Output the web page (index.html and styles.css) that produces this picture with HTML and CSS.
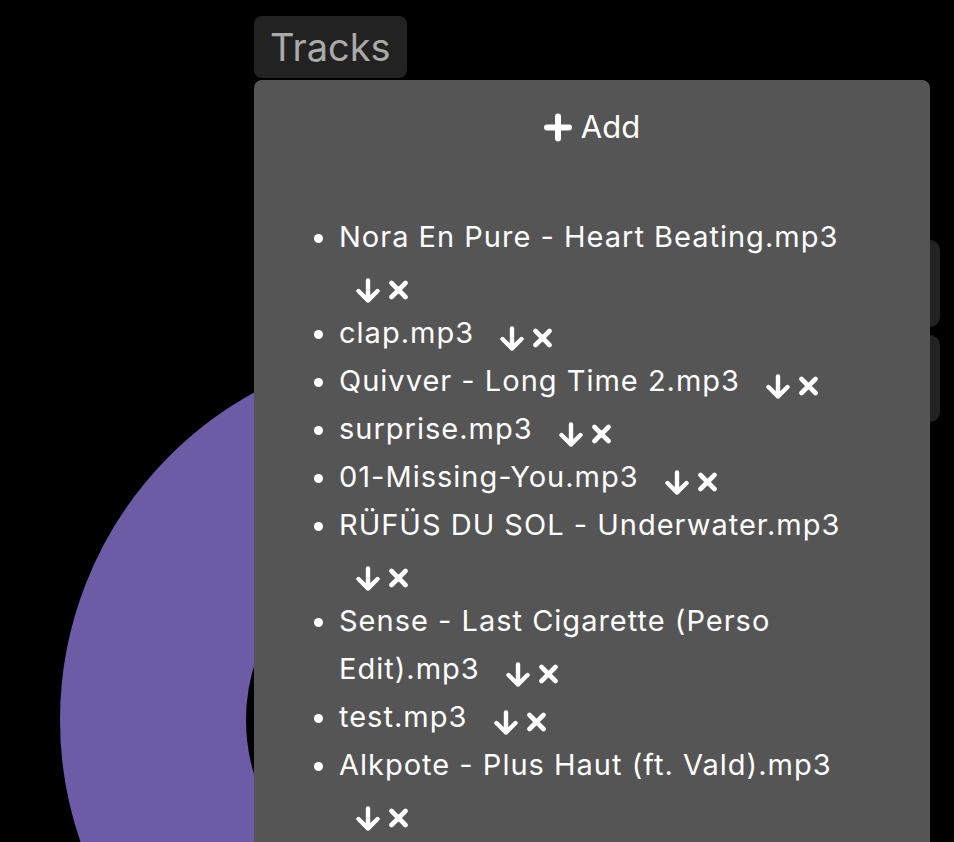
FILE: index.html
```html
<!DOCTYPE html>
<html lang="en">
<head>
<meta charset="utf-8">
<title>Tracks</title>
<link rel="stylesheet" href="styles.css">
</head>
<body>
<div class="stage">
  <svg class="disc" width="954" height="842" viewBox="0 0 954 842" aria-hidden="true">
    <circle cx="433" cy="720" r="280" fill="none" stroke="#6b5ca5" stroke-width="186"/>
  </svg>

  <div class="side-controls">
    <div class="side-box"></div>
    <div class="side-box"></div>
  </div>

  <div class="tracks">
    <div class="tab">Tracks</div>
    <div class="panel">
      <button class="add-btn" type="button">
        <svg class="plus" width="28" height="29" viewBox="0 0 28 29" aria-hidden="true">
          <path d="M14 3.5V25.5M3 14.5H25" stroke="#fff" stroke-width="6" stroke-linecap="round" fill="none"/>
        </svg>
        <span>Add</span>
      </button>

      <ul class="track-list">
        <li>Nora En Pure - Heart Beating.mp3 <span class="actions"><svg class="i-down" width="26" height="25" viewBox="0 0 26 25"><path d="M13 2.5V22.5M3.5 13L13 22.5L22.5 13" stroke="#fff" stroke-width="4.4" stroke-linecap="round" stroke-linejoin="round" fill="none"/></svg><svg class="i-x" width="21" height="20" viewBox="0 0 21 20"><path d="M3.5 3L17.5 17M17.5 3L3.5 17" stroke="#fff" stroke-width="4.6" stroke-linecap="round" fill="none"/></svg></span></li>
        <li>clap.mp3 <span class="actions"><svg class="i-down" width="26" height="25" viewBox="0 0 26 25"><path d="M13 2.5V22.5M3.5 13L13 22.5L22.5 13" stroke="#fff" stroke-width="4.4" stroke-linecap="round" stroke-linejoin="round" fill="none"/></svg><svg class="i-x" width="21" height="20" viewBox="0 0 21 20"><path d="M3.5 3L17.5 17M17.5 3L3.5 17" stroke="#fff" stroke-width="4.6" stroke-linecap="round" fill="none"/></svg></span></li>
        <li>Quivver - Long Time 2.mp3 <span class="actions"><svg class="i-down" width="26" height="25" viewBox="0 0 26 25"><path d="M13 2.5V22.5M3.5 13L13 22.5L22.5 13" stroke="#fff" stroke-width="4.4" stroke-linecap="round" stroke-linejoin="round" fill="none"/></svg><svg class="i-x" width="21" height="20" viewBox="0 0 21 20"><path d="M3.5 3L17.5 17M17.5 3L3.5 17" stroke="#fff" stroke-width="4.6" stroke-linecap="round" fill="none"/></svg></span></li>
        <li>surprise.mp3 <span class="actions"><svg class="i-down" width="26" height="25" viewBox="0 0 26 25"><path d="M13 2.5V22.5M3.5 13L13 22.5L22.5 13" stroke="#fff" stroke-width="4.4" stroke-linecap="round" stroke-linejoin="round" fill="none"/></svg><svg class="i-x" width="21" height="20" viewBox="0 0 21 20"><path d="M3.5 3L17.5 17M17.5 3L3.5 17" stroke="#fff" stroke-width="4.6" stroke-linecap="round" fill="none"/></svg></span></li>
        <li>01-Missing-You.mp3 <span class="actions"><svg class="i-down" width="26" height="25" viewBox="0 0 26 25"><path d="M13 2.5V22.5M3.5 13L13 22.5L22.5 13" stroke="#fff" stroke-width="4.4" stroke-linecap="round" stroke-linejoin="round" fill="none"/></svg><svg class="i-x" width="21" height="20" viewBox="0 0 21 20"><path d="M3.5 3L17.5 17M17.5 3L3.5 17" stroke="#fff" stroke-width="4.6" stroke-linecap="round" fill="none"/></svg></span></li>
        <li>RÜFÜS DU SOL - Underwater.mp3 <span class="actions"><svg class="i-down" width="26" height="25" viewBox="0 0 26 25"><path d="M13 2.5V22.5M3.5 13L13 22.5L22.5 13" stroke="#fff" stroke-width="4.4" stroke-linecap="round" stroke-linejoin="round" fill="none"/></svg><svg class="i-x" width="21" height="20" viewBox="0 0 21 20"><path d="M3.5 3L17.5 17M17.5 3L3.5 17" stroke="#fff" stroke-width="4.6" stroke-linecap="round" fill="none"/></svg></span></li>
        <li>Sense - Last Cigarette (Perso Edit).mp3 <span class="actions"><svg class="i-down" width="26" height="25" viewBox="0 0 26 25"><path d="M13 2.5V22.5M3.5 13L13 22.5L22.5 13" stroke="#fff" stroke-width="4.4" stroke-linecap="round" stroke-linejoin="round" fill="none"/></svg><svg class="i-x" width="21" height="20" viewBox="0 0 21 20"><path d="M3.5 3L17.5 17M17.5 3L3.5 17" stroke="#fff" stroke-width="4.6" stroke-linecap="round" fill="none"/></svg></span></li>
        <li>test.mp3 <span class="actions"><svg class="i-down" width="26" height="25" viewBox="0 0 26 25"><path d="M13 2.5V22.5M3.5 13L13 22.5L22.5 13" stroke="#fff" stroke-width="4.4" stroke-linecap="round" stroke-linejoin="round" fill="none"/></svg><svg class="i-x" width="21" height="20" viewBox="0 0 21 20"><path d="M3.5 3L17.5 17M17.5 3L3.5 17" stroke="#fff" stroke-width="4.6" stroke-linecap="round" fill="none"/></svg></span></li>
        <li>Alkpote - Plus Haut (ft. Vald).mp3 <span class="actions"><svg class="i-down" width="26" height="25" viewBox="0 0 26 25"><path d="M13 2.5V22.5M3.5 13L13 22.5L22.5 13" stroke="#fff" stroke-width="4.4" stroke-linecap="round" stroke-linejoin="round" fill="none"/></svg><svg class="i-x" width="21" height="20" viewBox="0 0 21 20"><path d="M3.5 3L17.5 17M17.5 3L3.5 17" stroke="#fff" stroke-width="4.6" stroke-linecap="round" fill="none"/></svg></span></li>
      </ul>
    </div>
  </div>
</div>
</body>
</html>
```

FILE: styles.css
```css
* {
  box-sizing: border-box;
}

html,
body {
  margin: 0;
  padding: 0;
  background: #000;
}

body {
  width: 954px;
  height: 842px;
  overflow: hidden;
  font-family: Inter, "Noto Sans", "DejaVu Sans", sans-serif;
}

.stage {
  position: relative;
  width: 954px;
  height: 842px;
  overflow: hidden;
  display: flex;
  flex-direction: column;
  align-items: flex-end;
  padding: 240px 14px 0 0;
}

.disc {
  position: absolute;
  left: 0;
  top: 0;
}

.side-controls {
  position: relative;
  display: flex;
  flex-direction: column;
  gap: 8px;
}

.side-box {
  width: 220px;
  height: 87px;
  background: #222;
  border-radius: 10px;
}

.tracks {
  position: absolute;
  left: 254px;
  top: 16px;
  width: 676px;
  display: flex;
  flex-direction: column;
  align-items: flex-start;
}

.tab {
  background: #222;
  color: #aaa;
  font-size: 38px;
  line-height: 62px;
  height: 62px;
  padding: 0 16px 0 16px;
  border-radius: 8px;
  margin-bottom: 2px;
}

.panel {
  align-self: stretch;
  background: #555;
  border-radius: 8px 8px 0 0;
  min-height: 780px;
  padding: 22px 60px 40px 85px;
}

.add-btn {
  display: flex;
  align-items: center;
  justify-content: center;
  gap: 9px;
  width: calc(100% + 25px);
  margin-left: -25px;
  height: 48px;
  background: none;
  border: 0;
  padding: 0;
  color: #fff;
  font-family: inherit;
  font-size: 31px;
}

.plus {
  display: block;
  margin-top: 3px;
}

.track-list {
  margin: 63px 0 0;
  padding: 0;
  list-style: disc outside;
  color: #fff;
  font-size: 29px;
  letter-spacing: 1px;
  line-height: 48px;
}

.actions {
  display: inline-block;
  white-space: nowrap;
  margin-left: 16px;
  letter-spacing: 0;
}

.i-down {
  vertical-align: -8px;
  margin-right: 7px;
}

.i-x {
  vertical-align: -5px;
}
```
